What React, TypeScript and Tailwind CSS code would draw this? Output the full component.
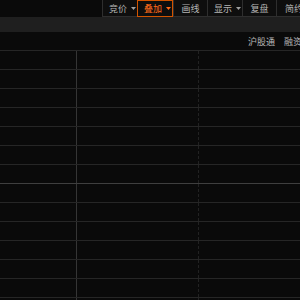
import React from "react";

const font = { fontFamily: '"Noto Sans CJK SC", "Noto Sans", sans-serif' };

function Caret({ color }: { color: string }) {
  return (
    <svg width="5" height="3" viewBox="0 0 5 3" className="ml-[4px]">
      <path d="M0 0 L5 0 L2.5 3 Z" fill={color} />
    </svg>
  );
}

type Btn = { label: string; w: string; caret?: boolean; active?: boolean };

const buttons: Btn[] = [
  { label: "竞价", w: "w-[35px]", caret: true },
  { label: "叠加", w: "w-[36px]", caret: true, active: true },
  { label: "画线", w: "w-[34px]" },
  { label: "显示", w: "w-[35px]", caret: true },
  { label: "复盘", w: "w-[34px]" },
  { label: "简约", w: "w-[35px]" },
];

export default function App() {
  const rows = Array.from({ length: 14 });
  return (
    <div
      className="w-[300px] h-[300px] overflow-hidden bg-[#0a0a0a] flex flex-col text-[9px] leading-none"
      style={font}
    >
      {/* toolbar */}
      <div className="flex h-[17px] shrink-0 bg-[#0a0a0a]">
        <div className="w-[102px] shrink-0" />
        <div className="flex whitespace-nowrap">
          {buttons.map((b) =>
            b.active ? (
              <div
                key={b.label}
                className={`${b.w} shrink-0 h-[17px] flex items-center pl-[6px] border border-[#d35400] text-[#ff6a1a] bg-[#0e0e0e]`}
              >
                <span>{b.label}</span>
                {b.caret && <Caret color="#ff6a1a" />}
              </div>
            ) : (
              <div
                key={b.label}
                className={`${b.w} shrink-0 h-[17px] flex items-center ${
                  b.caret ? "pl-[6px]" : "justify-center"
                } border-l border-b border-[#2e2e2e] text-[#b4b4b4] bg-[#0e0e0e]`}
              >
                <span>{b.label}</span>
                {b.caret && <Caret color="#a0a0a0" />}
              </div>
            )
          )}
        </div>
      </div>
      {/* band */}
      <div className="h-[15px] shrink-0 bg-[#1f1f1f]" />
      {/* text row */}
      <div className="h-[18px] shrink-0 flex items-center pl-[248px] gap-[9px] whitespace-nowrap text-[#b8b8b8]">
        <span className="shrink-0">沪股通</span>
        <span className="shrink-0">融资融券</span>
      </div>
      {/* grid */}
      <div className="flex flex-col">
        {rows.map((_, i) => (
          <div
            key={i}
            className={`h-[19px] shrink-0 grid grid-cols-[76px_122px_1fr] border-t ${
              i === 7 ? "border-[#3f3f3f]" : "border-[#262626]"
            }`}
          >
            <div />
            <div className="border-l border-[#353535]" />
            <div className="border-l border-dashed border-[#222222]" />
          </div>
        ))}
      </div>
    </div>
  );
}
